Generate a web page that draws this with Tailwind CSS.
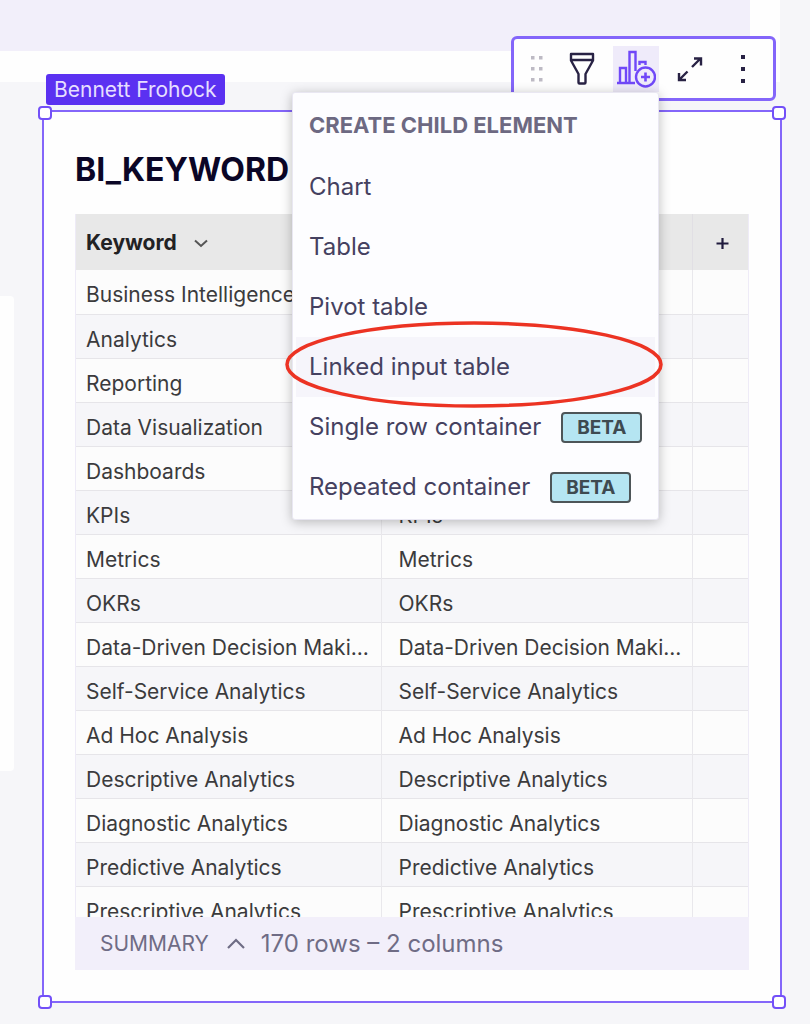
<!DOCTYPE html>
<html lang="en">
<head>
  <meta charset="UTF-8" />
  <meta name="viewport" content="width=device-width, initial-scale=1" />
  <title>BI_KEYWORD</title>
  <script src="https://cdn.jsdelivr.net/npm/@tailwindcss/browser@4"></script>
</head>
<body class="flex flex-col h-screen overflow-hidden bg-[#f6f6f9] font-['Inter',sans-serif]">

  <!-- Page header -->
  <header class="mr-[30px] bg-[#fefefe] pb-[31px]">
    <div class="h-[51px] mr-[30px] bg-[#f2effa]"></div>
  </header>

  <main class="flex flex-1 min-h-0 items-start">
    <!-- Neighbouring element -->
    <div class="w-[14px] h-[475px] mt-[214px] shrink-0 rounded-r-sm bg-[#fefefe]"></div>

    <!-- Selected element -->
    <section class="relative flex flex-col flex-1 min-w-0 self-stretch mt-7 mb-[21px] mx-7 px-[31px] pb-[31px] bg-[#fefefe] border-2 border-[#8466fa]">
      <span class="absolute -top-[38px] left-[2px] h-[31px] px-2 rounded-[3px] bg-[#5b31f1] text-[21px] leading-[31px] text-[#e6dfff] whitespace-nowrap">Bennett Frohock</span>

      <h1 class="pt-[38px] pb-6 text-[32px] leading-[40px] font-bold text-[#0b0626]">BI_KEYWORD</h1>

      <div class="flex-1 min-h-0 overflow-hidden border-x border-[#eeebf7]">
        <table class="w-full table-fixed border-collapse text-[21px] leading-6 text-[#3b3b3d]">
          <thead>
            <tr class="h-[56px] bg-[#e8e8e8] text-left text-[#222224]">
              <th class="w-[305px] pl-[10px] pt-[2px] font-bold">
                <span class="flex items-center gap-4">Keyword
                  <svg class="w-4 h-4" viewBox="0 0 16 16" fill="none" stroke="#555" stroke-width="2"><path d="M2 5.500l6 5.500 6-5.500" /></svg>
                </span>
              </th>
              <th class="w-[311px] border-r border-[#e1dfe4]"></th>
              <th class="pl-1 text-center">
                <button type="button" aria-label="Add column" class="align-middle">
                  <svg class="w-[13px] h-[13px]" viewBox="0 0 13 13" fill="none" stroke="#1f1a3d" stroke-width="2.200"><path d="M6.500 1v11M.5 6.500h12" /></svg>
                </button>
              </th>
            </tr>
          </thead>
          <tbody id="rows"></tbody>
        </table>
      </div>

      <div class="flex items-center h-[53px] pl-[25px] bg-[#f2effa] text-[#6f6c85]">
        <button type="button" class="flex items-center gap-[18px] text-[21px]">SUMMARY
          <svg class="w-[18px] h-[18px]" viewBox="0 0 18 18" fill="none" stroke="currentColor" stroke-width="2.200"><path d="M1 13l8-8 8 8" /></svg>
        </button>
        <span class="ml-4 text-[24px]">170 rows – 2 columns</span>
      </div>

      <!-- Resize handles -->
      <i class="absolute -top-[6px] -left-[6px] w-[14px] h-[14px] rounded-[4px] border-2 border-[#7350f8] bg-white"></i>
      <i class="absolute -top-[6px] -right-[6px] w-[14px] h-[14px] rounded-[4px] border-2 border-[#7350f8] bg-white"></i>
      <i class="absolute -bottom-[8px] -left-[6px] w-[14px] h-[14px] rounded-[4px] border-2 border-[#7350f8] bg-white"></i>
      <i class="absolute -bottom-[8px] -right-[6px] w-[14px] h-[14px] rounded-[4px] border-2 border-[#7350f8] bg-white"></i>

      <!-- Toolbar -->
      <div class="absolute -top-[76px] right-1 flex items-center w-[265px] h-[65px] pl-4 rounded-md border-[3px] border-[#8466fa] bg-[#fefefe]">
        <button type="button" aria-label="Drag">
          <svg class="w-4 h-[30px]" viewBox="0 0 16 30" fill="#bdbac4"><path d="M1 2h3.500v3.500H1zM9 2h3.500v3.500H9zM1 13h3.500v3.500H1zM9 13h3.500v3.500H9zM1 24h3.500v3.500H1zM9 24h3.500v3.500H9z" /></svg>
        </button>
        <button type="button" aria-label="Filter" class="ml-[22px]">
          <svg class="w-[28px] h-[34px]" viewBox="0 0 28 34" fill="none" stroke="#282244" stroke-width="2.400" stroke-linejoin="round"><path d="M3 2h22v6.500L17.500 22v8.500q0 1-1 1h-5q-1 0-1-1V22L3 8.500zM3 8h22" /></svg>
        </button>
        <button type="button" aria-label="Create child element" class="flex items-center justify-center w-[46px] h-[46px] ml-[17px] bg-[#efebfa]">
          <svg class="w-10 h-10" viewBox="0 0 40 40" fill="none" stroke="#7048f8" stroke-width="2.400"><path d="M1 34h18M4 34V19h6v15M13.500 34V3h6v19M23.500 16v-3h6v3" /><circle cx="29.500" cy="28" r="9.500" fill="#efebfa" /><path d="M29.500 23.500v9M25 28h9" stroke-width="2.600" /></svg>
        </button>
        <button type="button" aria-label="Maximize" class="ml-[18px]">
          <svg class="w-[26px] h-[26px]" viewBox="0 0 26 26" fill="none" stroke="#282244" stroke-width="2.400"><path d="M15 11l8-8M17 2.500h7v7M10.500 15.500l-8 8M2 17v7h7" /></svg>
        </button>
        <button type="button" aria-label="More" class="ml-[37px]">
          <svg class="w-[6px] h-[30px]" viewBox="0 0 6 30" fill="#282244"><path d="M1 1h4v4H1zM1 13h4v4H1zM1 25h4v4H1z" /></svg>
        </button>
      </div>

      <!-- Create child menu -->
      <div class="absolute -top-5 right-[121px] w-[367px] pt-1 pb-[2px] rounded-[3px] bg-[#fdfdff] border border-[#e9e7f2] shadow-[0_2px_12px_rgba(0,0,0,0.26)] text-[24px] text-[#454160]">
        <h2 class="flex items-center h-[60px] pl-4 pb-1 text-[22px] font-bold text-[#6d6982]">CREATE CHILD ELEMENT</h2>
        <button type="button" class="flex items-center w-full h-[60px] pl-4">Chart</button>
        <button type="button" class="flex items-center w-full h-[60px] pl-4">Table</button>
        <button type="button" class="flex items-center w-full h-[60px] pl-4">Pivot table</button>
        <div class="relative px-[3px]">
          <button type="button" class="flex items-center w-full h-[60px] pl-[13px] bg-[#f6f5fb]">Linked input table</button>
          <svg class="absolute -top-4 -left-2 w-[378px] h-[87px] pointer-events-none" viewBox="0 0 378 87" fill="none" stroke="#ec3323" stroke-width="3.500"><ellipse cx="189" cy="43.500" rx="187" ry="41.500" /></svg>
        </div>
        <button type="button" class="flex items-center w-full h-[60px] pl-4">Single row container
          <span class="ml-5 w-[81px] h-[31px] rounded-[4px] border-2 border-[#4d5558] bg-[#b5e5f2] text-[19px] leading-[27px] font-bold text-[#3e4a50]">BETA</span>
        </button>
        <button type="button" class="flex items-center w-full h-[60px] pl-4">Repeated container
          <span class="ml-5 w-[81px] h-[31px] rounded-[4px] border-2 border-[#4d5558] bg-[#b5e5f2] text-[19px] leading-[27px] font-bold text-[#3e4a50]">BETA</span>
        </button>
      </div>
    </section>
  </main>

  <script>
    const keywords = [
      'Business Intelligence', 'Analytics', 'Reporting', 'Data Visualization', 'Dashboards',
      'KPIs', 'Metrics', 'OKRs', 'Data-Driven Decision Maki...', 'Self-Service Analytics',
      'Ad Hoc Analysis', 'Descriptive Analytics', 'Diagnostic Analytics',
      'Predictive Analytics', 'Prescriptive Analytics'
    ];

    document.getElementById('rows').innerHTML = keywords.map((k) => `
      <tr class="h-[44px] border-b border-[#e6e5e9] bg-[#fcfcfc] even:bg-[#f6f6f9]">
        <td class="pl-[10px] pt-[7px] border-r border-[#e9e8ec] whitespace-nowrap">${k}</td>
        <td class="pl-[17px] pt-[7px] border-r border-[#e9e8ec] whitespace-nowrap">${k}</td>
        <td></td>
      </tr>`).join('');
  </script>
</body>
</html>
